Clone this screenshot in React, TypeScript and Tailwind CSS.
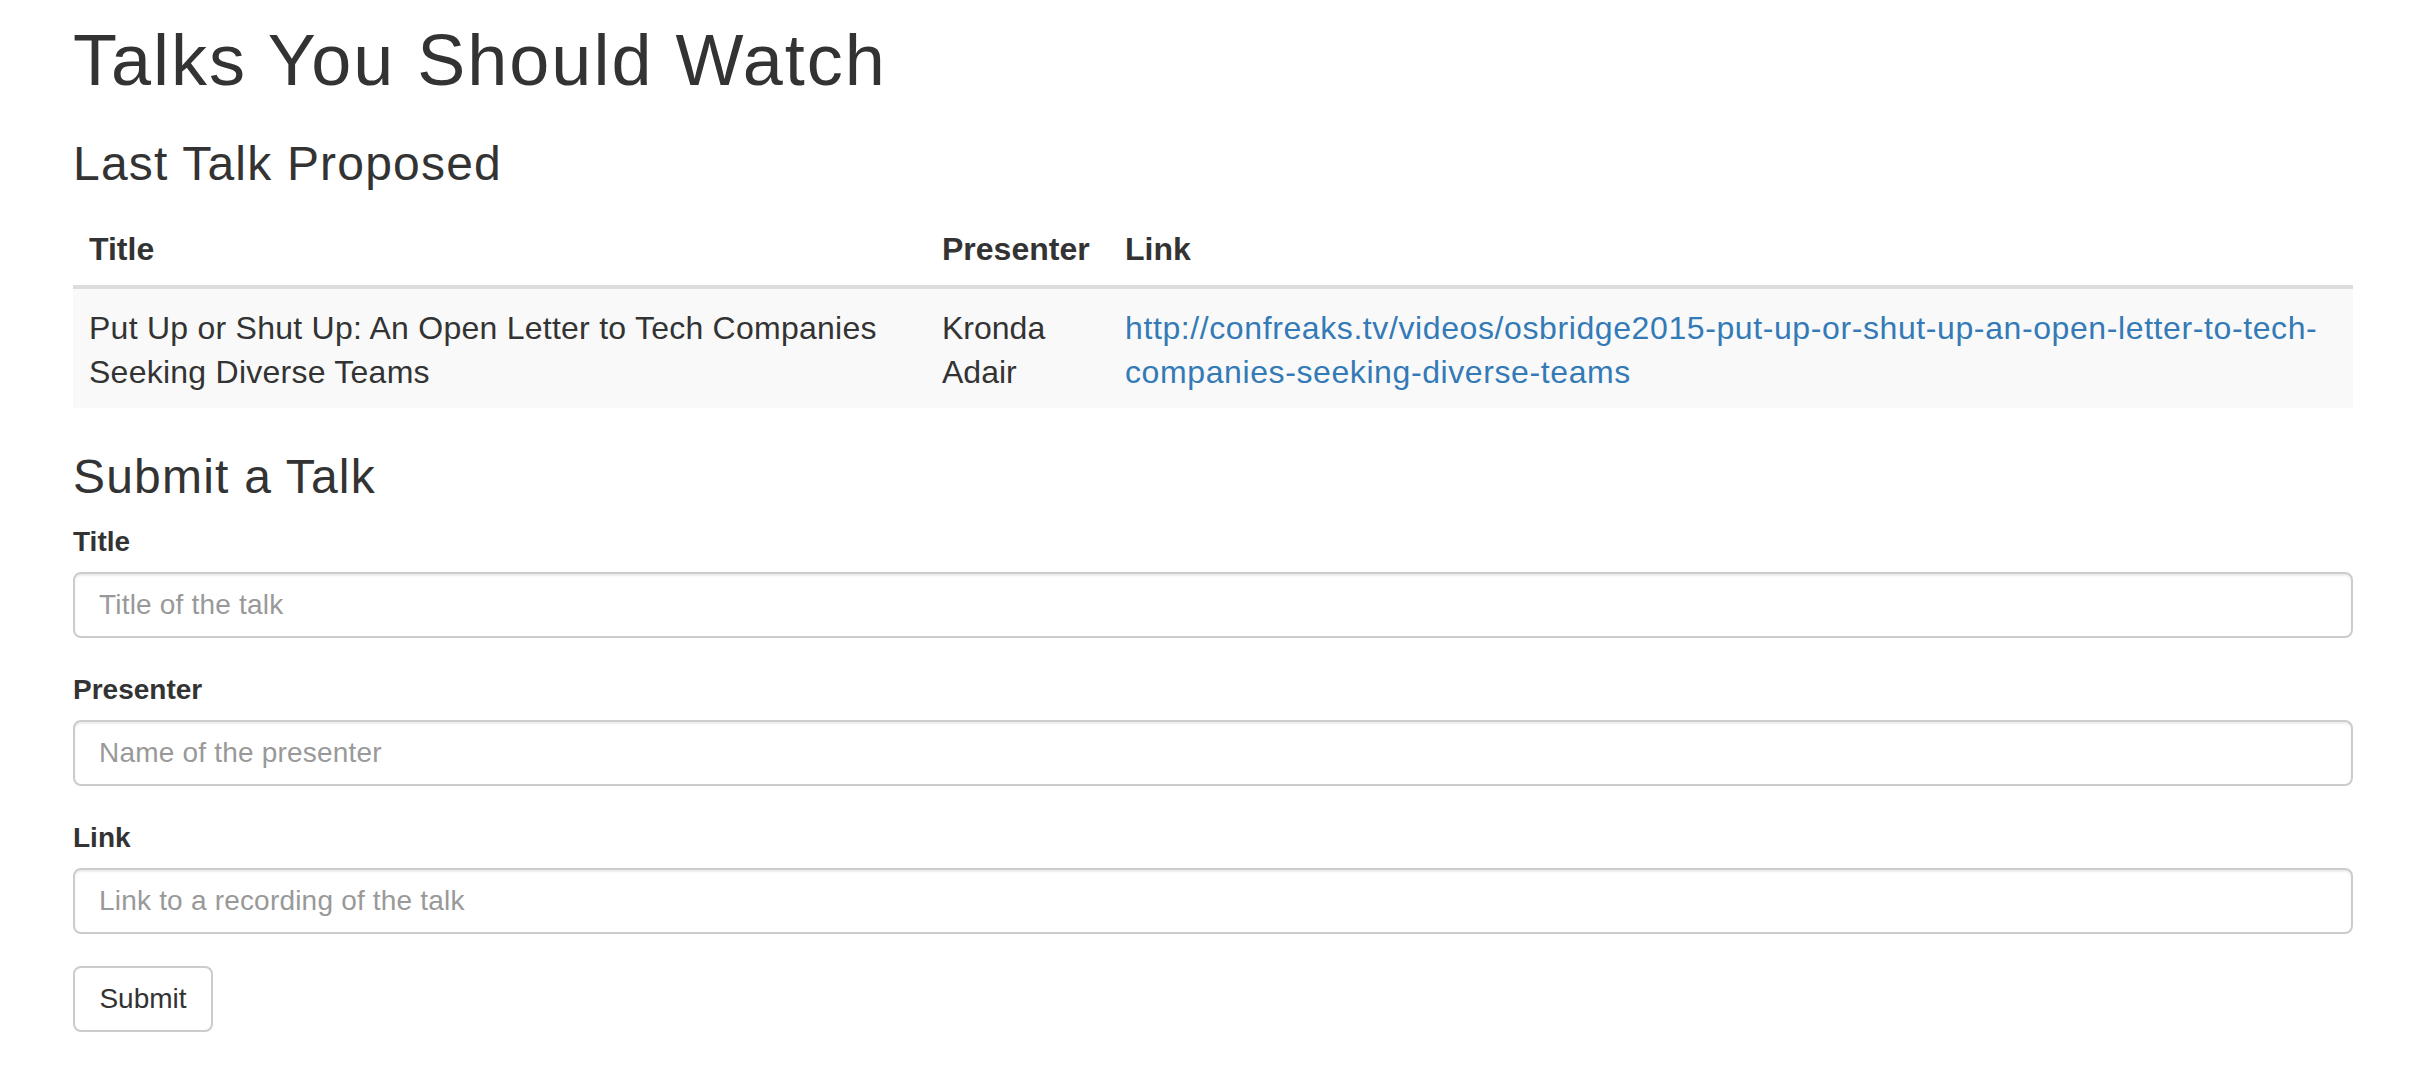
import React from "react";

const font = { fontFamily: '"Liberation Sans", Arial, Helvetica, sans-serif' };

function Field({ label, placeholder }: { label: string; placeholder: string }) {
  return (
    <div className="flex flex-col mb-[32px]">
      <label className="block h-[40px] leading-[40px] text-[28px] font-bold text-[#333] mb-[10px]">{label}</label>
      <input
        type="text"
        placeholder={placeholder}
        className="block w-full h-[66px] rounded-[8px] border-2 border-[#ccc] bg-white px-[24px] text-[28px] tracking-[0.2px] text-[#555] placeholder:text-[#999] shadow-[inset_0_2px_2px_rgba(0,0,0,0.075)] outline-none"
      />
    </div>
  );
}

export default function App() {
  return (
    <div className="min-h-screen bg-white text-[#333]" style={font}>
      <div className="mx-auto w-[2280px] pt-[20px]">
        <h1 className="h-[80px] leading-[80px] text-[72px] font-normal tracking-[2px] text-[#333]">Talks You Should Watch</h1>
        <h3 className="mt-[37px] h-[53px] leading-[53px] text-[48px] font-normal tracking-[1.2px] text-[#333]">Last Talk Proposed</h3>
        <table className="mt-[23px] w-full table-fixed border-collapse text-[32px]">
          <colgroup>
            <col className="w-[853px]" />
            <col className="w-[183px]" />
            <col />
          </colgroup>
          <thead>
            <tr>
              <th className="px-[16px] py-[16px] text-left font-bold leading-[40px] border-b-4 border-[#ddd]">Title</th>
              <th className="px-[16px] py-[16px] text-left font-bold leading-[40px] border-b-4 border-[#ddd]">Presenter</th>
              <th className="px-[16px] py-[16px] text-left font-bold leading-[40px] border-b-4 border-[#ddd]">Link</th>
            </tr>
          </thead>
          <tbody>
            <tr className="bg-[#f9f9f9]">
              <td className="px-[16px] pt-[17px] pb-[14px] align-top leading-[44px] tracking-[0.25px]">
                Put Up or Shut Up: An Open Letter to Tech Companies Seeking Diverse Teams
              </td>
              <td className="px-[16px] pt-[17px] pb-[14px] align-top leading-[44px]">Kronda Adair</td>
              <td className="px-[16px] pt-[17px] pb-[14px] align-top leading-[44px] tracking-[0.6px]">
                <a href="#" className="text-[#337ab7] no-underline">
                  http://confreaks.tv/videos/osbridge2015-put-up-or-shut-up-an-open-letter-to-tech-
                  <br />
                  companies-seeking-diverse-teams
                </a>
              </td>
            </tr>
          </tbody>
        </table>
        <h3 className="mt-[42px] h-[53px] leading-[53px] text-[48px] font-normal tracking-[1.2px] text-[#333]">Submit a Talk</h3>
        <form className="mt-[19px]" onSubmit={(e) => e.preventDefault()}>
          <Field label="Title" placeholder="Title of the talk" />
          <Field label="Presenter" placeholder="Name of the presenter" />
          <Field label="Link" placeholder="Link to a recording of the talk" />
          <button
            type="submit"
            className="block w-[140px] h-[66px] rounded-[8px] border-2 border-[#ccc] bg-white text-[28px] text-[#333] text-center"
          >
            Submit
          </button>
        </form>
      </div>
    </div>
  );
}
